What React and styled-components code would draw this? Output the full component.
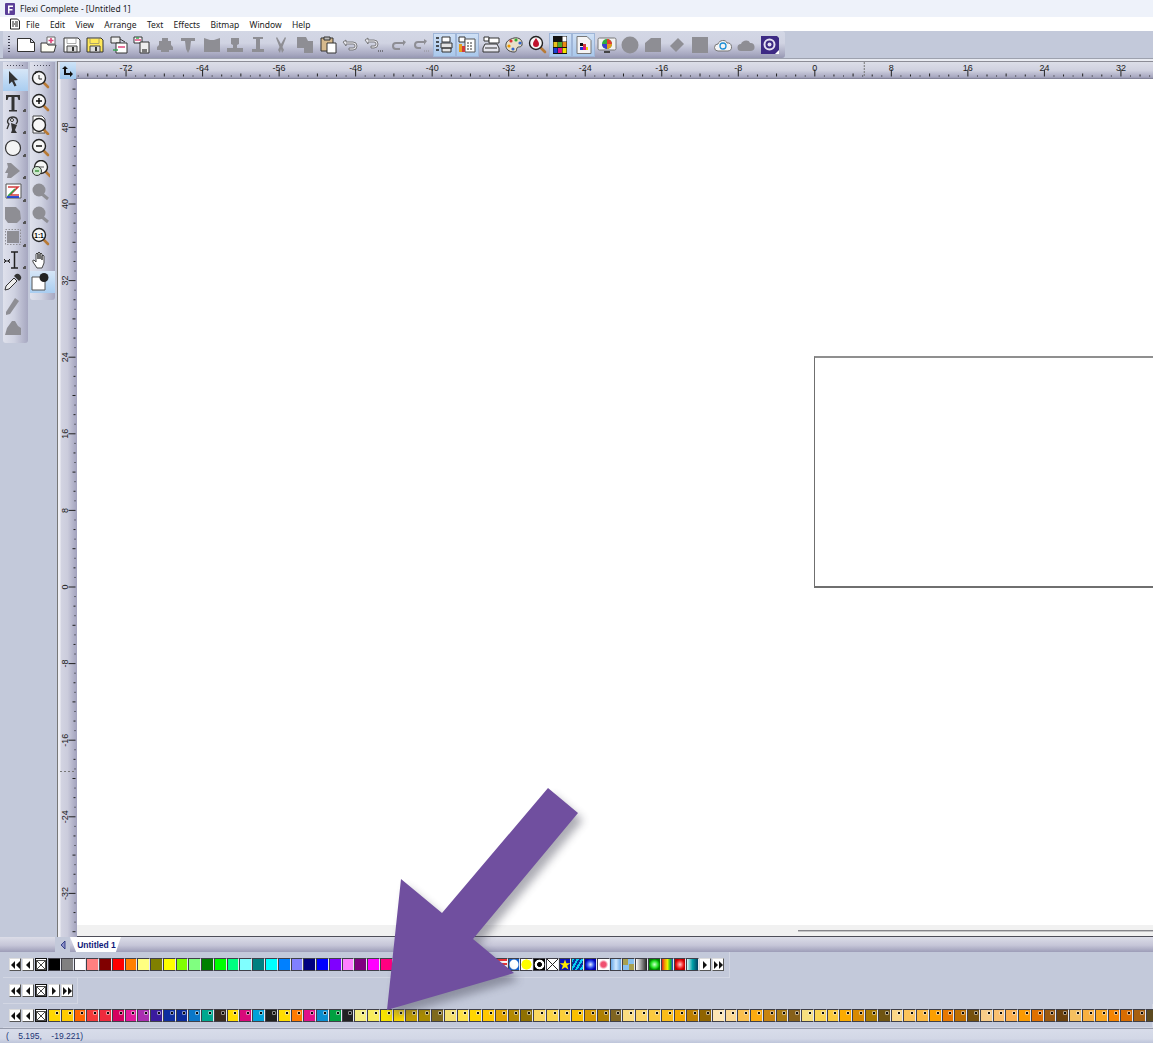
import React from "react";
import styled, { createGlobalStyle } from "styled-components";

const GlobalStyle = createGlobalStyle`
  html, body { margin: 0; padding: 0; background: #c3c9da; }
  body { font-family: "Noto Sans", "Liberation Sans", sans-serif; overflow: hidden; }
`;

const Page = styled.div`
  position: relative;
  width: 1153px;
  height: 1043px;
  overflow: hidden;
  display: flex;
  flex-direction: column;
  background: #c3c9da;
`;

const TitleBar = styled.div`
  height: 17px;
  display: flex;
  align-items: center;
  gap: 5px;
  padding-left: 5px;
  background: #eef2fa;
  font-size: 8.5px;
  color: #1c1c1c;
`;

const MenuBar = styled.div`
  height: 14px;
  display: flex;
  align-items: center;
  padding-left: 9px;
  background: #fff;
  font-size: 8.5px;
  color: #222;
`;

const MenuItem = styled.span`
  margin-right: 10.3px;
`;

const ToolbarRow = styled.div`
  height: 27px;
  flex: none;
  display: flex;
  background: #c3c9da;
  border-bottom: 1px solid #9da1ae;
  box-sizing: content-box;
`;

const ToolbarBand = styled.div`
  width: 782px;
  margin-left: 3px;
  display: flex;
  align-items: center;
  padding-left: 5px;
  box-sizing: border-box;
  border-radius: 0 3px 3px 0;
  background: linear-gradient(#d3d7e5 0%, #d0d3e2 45%, #a9aac2 85%, #9697b2 100%);
`;

const Gripper = styled.div`
  width: 2px;
  height: 18px;
  margin-right: 4px;
  background: repeating-linear-gradient(#3c3c4c 0 1px, transparent 1px 3px);
`;

const BarButton = styled.div`
  width: 23.25px;
  height: 24px;
  flex: none;
  display: flex;
  align-items: center;
  justify-content: center;
  box-sizing: border-box;
  ${(p) =>
    p.$active &&
    `background: linear-gradient(#cfe0f5, #a9c8ec);
     border: 1px solid #9fb6d8;`}
`;

const Workspace = styled.div`
  height: 878px;
  flex: none;
  display: flex;
  border-top: 2px solid #e9ebf2;
  box-sizing: border-box;
`;

const Dock = styled.div`
  width: 57px;
  flex: none;
  display: flex;
  gap: 2px;
  padding: 1px 0 0 3px;
  box-sizing: border-box;
  background: #c3c9da;
`;

const ToolColumn = styled.div`
  width: 25px;
  height: ${(p) => p.$height}px;
  border-radius: 0 0 3px 3px;
  background: linear-gradient(90deg, #dfe1ec 0%, #cfd2e1 45%, #a6a7c0 100%);
`;

const ColumnGrip = styled.div`
  height: 7px;
  margin: 0 4px 0 4px;
  background: repeating-linear-gradient(90deg, #4b4b5b 0 1px, transparent 1px 3px) 0 3px / 100% 1px no-repeat;
`;

const ToolButton = styled.div`
  height: 22.45px;
  display: flex;
  align-items: center;
  justify-content: center;
  padding-right: 5px;
  position: relative;
  ${(p) => p.$active && "background: linear-gradient(#d6e6f7 0%, #a9cdf0 100%);"}
  ${(p) =>
    p.$corner &&
    `&::after {
      content: "";
      position: absolute;
      right: 2px;
      bottom: 2px;
      border-right: 2px solid #555;
      border-bottom: 2px solid #555;
      width: 1px;
      height: 1px;
    }`}
`;

const DocumentArea = styled.div`
  flex: 1;
  min-width: 0;
  display: flex;
  flex-direction: column;
  background: #fff;
  border-left: 1px solid #777;
  border-top: 1px solid #8c8c96;
`;

const TopRulerRow = styled.div`
  height: 17px;
  flex: none;
  display: flex;
  background: linear-gradient(#dcdee8 0%, #cfd0df 50%, #a5a5be 90%, #77778c 100%);
`;

const RulerCorner = styled.div`
  width: 18px;
  flex: none;
  display: flex;
  align-items: center;
  justify-content: center;
  background: linear-gradient(#cfe4f8, #9dc7ee);
  border-left: 2px solid #e3e4ec;
  box-sizing: border-box;
`;

const BodyRow = styled.div`
  flex: 1;
  min-height: 0;
  display: flex;
`;

const SideRuler = styled.div`
  width: 19px;
  flex: none;
  background: linear-gradient(90deg, #f0f0f5 0 2px, #d3d4e2 3px, #cbccdc 50%, #a1a1bc 100%);
`;

const RulerSvg = styled.svg`
  display: block;
`;

const Canvas = styled.div`
  flex: 1;
  position: relative;
  display: flex;
  flex-direction: column;
  justify-content: flex-end;
  background: #fff;
  overflow: hidden;
`;

const PageOutline = styled.div`
  position: absolute;
  left: 737px;
  top: 277px;
  width: 500px;
  height: 232px;
  border: 1px solid #6f6f6f;
  border-top: 2px solid #8f8f8f;
  border-bottom: 2px solid #6f6f6f;
  box-sizing: border-box;
`;

const ScrollStrip = styled.div`
  height: 12px;
  flex: none;
  display: flex;
  justify-content: flex-end;
  background: #f1f1f1;
  border-bottom: 1px solid #4d4d58;
  box-sizing: border-box;
`;

const ScrollLine = styled.div`
  width: 355px;
  height: 1px;
  margin-top: 5px;
  background: #85858a;
  box-shadow: 0 1px 0 #c4c4c6;
`;

const TabStrip = styled.div`
  height: 15px;
  flex: none;
  display: flex;
  align-items: stretch;
  padding-left: 55px;
  background: linear-gradient(#dcdde8 0%, #c6c6d8 55%, #9d9db8 100%);
`;

const TabArrow = styled.div`
  width: 15px;
  display: flex;
  align-items: center;
  justify-content: center;
  background: #c3c9da;
`;

const Tab = styled.div`
  width: 51px;
  padding-left: 2px;
  box-sizing: border-box;
  display: flex;
  align-items: center;
  justify-content: center;
  background: #fff;
  color: #101a7a;
  font-family: "Liberation Sans", sans-serif;
  font-size: 8.5px;
  font-weight: 700;
  clip-path: polygon(0 0, 100% 0, 90% 100%, 12% 100%);
`;

const PaletteRow = styled.div`
  height: ${(p) => p.$height}px;
  flex: none;
  display: flex;
  align-items: center;
  box-sizing: border-box;
  ${(p) => p.$width && `width: ${p.$width}px;`}
  margin-left: 3px;
  padding-left: 6px;
  border-bottom: 1px solid #d2d6e3;
  border-right: 1px solid #d2d6e3;
`;

const NavButton = styled.div`
  width: 12px;
  height: 12.5px;
  margin-right: 1px;
  flex: none;
  display: flex;
  align-items: center;
  justify-content: center;
  box-sizing: border-box;
  color: #111;
  background: #fff;
  border: 1px solid #555;
  border-top-color: #ddd;
  border-left-color: #ddd;
`;

const EmptySwatch = styled(NavButton)`
  border: 1.5px solid #111;
`;

const Swatch = styled.div`
  width: 12.77px;
  height: 12.5px;
  flex: none;
  position: relative;
  box-sizing: border-box;
  overflow: hidden;
  border: 1px solid #3f3f48;
  border-right: 1.2px solid #e6e9f2;
  background: ${(p) => p.$fill};
`;

const SwatchDot = styled.i`
  position: absolute;
  top: 2px;
  right: 2px;
  width: 2px;
  height: 2px;
  background: #0c0c0c;
  box-shadow: 0 0 0 0.6px rgba(240, 240, 240, 0.85);
`;

const StarMark = styled.i`
  position: absolute;
  inset: 0;
  background: #ffe800;
  clip-path: polygon(50% 3%, 63% 38%, 100% 38%, 70% 60%, 82% 97%, 50% 75%, 18% 97%, 30% 60%, 0 38%, 37% 38%);
`;

const StatusBar = styled.div`
  flex: 1;
  display: flex;
  align-items: center;
  padding-left: 6px;
  white-space: pre;
  font-family: "Liberation Sans", sans-serif;
  font-size: 8.5px;
  color: #1c3576;
  background: linear-gradient(#d8dcea 0%, #d2d7e6 70%, #bec5da 100%);
  border-top: 1px solid #969bab;
`;

const ArrowOverlay = styled.svg`
  position: absolute;
  left: 0;
  top: 0;
  pointer-events: none;
`;

/* toolbar drawings */
const G = "#8e8e94";
const Floppy = ({ fill }) => (
  <>
    <path d="M2 3h14l2 2v12H2z" fill={fill} stroke="#333" />
    <path d="M5 3.500h9v5H5z" fill={fill} stroke="#777" strokeWidth=".6" />
    <path d="M5 11h10v6H5z" fill="#ddd" stroke="#444" />
    <path d="M11 12v4" stroke="#333" strokeWidth="2" />
  </>
);
const Lens = ({ children, cx = 9, cy = 8 }) => (
  <>
    <path d={`M${cx + 4} ${cy + 4}l5 5`} stroke="#b87a35" strokeWidth="2.6" strokeLinecap="round" />
    <circle cx={cx} cy={cy} r="6.500" fill="#f7f7f7" stroke="#222" strokeWidth="1.4" />
    {children}
  </>
);
const S = ({ children }) => (
  <svg width="20" height="20" viewBox="0 0 20 20">
    {children}
  </svg>
);

const barIcons = [
  { d: <path d="M1.500 3.500h13l4 4v9h-17z M14.500 3.500v4h4" fill="#fff" stroke="#333" /> },
  { d: <><path d="M2 8h6l1 2h8l-2 7H2z" fill="#fdfdf4" stroke="#333" /><path d="M8 2h8v7H8z" fill="#fff" stroke="#666" /><path d="M12 3v5M9.500 5.500h5" stroke="#e0457a" strokeWidth="1.6" /></> },
  { d: <Floppy fill="#fff" /> },
  { d: <Floppy fill="#ffe95a" /> },
  { d: <><path d="M2 2h9v6H2z" fill="#eee" stroke="#333" /><path d="M7 8h11v10H7z" fill="#fff" stroke="#333" /><path d="M9 12h7" stroke="#e0457a" strokeWidth="1.5" /><path d="M4 15h5" stroke="#3aa655" strokeWidth="1.5" /><path d="M11 4l5 3" stroke="#333" /></> },
  { d: <><path d="M2 2h8v6H2z" fill="#fff" stroke="#333" /><path d="M8 7h9v11H8z" fill="#eee" stroke="#333" /><path d="M3 5h6" stroke="#e0457a" strokeWidth="1.5" /><path d="M4 3h3" stroke="#3aa655" strokeWidth="1.5" /><path d="M10 14h5v4h-5z" fill="#777" /></> },
  { d: <path d="M7 3h6v3h3v4l2 2v3h-4v2H6v-2H2v-3l2-2V6h3z" fill={G} /> },
  { d: <path d="M3 3h14v3h-4l-1 8-2 4-2-4-1-8H3z" fill={G} /> },
  { d: <path d="M2 3l6 2h4l6-2v14H2z" fill={G} /> },
  { d: <path d="M6 3h8v6l-2 1v3h6v4H2v-4h6v-3L6 9z" fill={G} /> },
  { d: <path d="M5 2h10v2h-3v10h4v3H4v-3h4V4H5z" fill={G} /> },
  { d: <path d="M6 2l4 7 4-7 1 1-3.500 9 1.500 3-2 3-1-4-1 4-2-3 1.500-3L5 3z" fill={G} /> },
  { d: <path d="M2 2h9l2 4h5v12H9v-5H2z" fill={G} /> },
  { d: <><path d="M3 3h12v13H3z" fill="#d6b98c" stroke="#333" /><path d="M6 2h6v3H6z" fill="#bbb" stroke="#333" /><path d="M9 8h9v10H9z" fill="#fff" stroke="#333" /></> },
  { d: <path d="M2 7l3-2v2h7q4 0 4 4t-4 4H8v-2h4q2 0 2-2t-2-2H5v2z" fill="#e8e8ee" stroke="#666" strokeWidth=".8" /> },
  { d: <><path d="M1 5l3-2v2h6q4 0 4 4t-4 4H7v-2h3q2 0 2-2t-2-2H4v2z" fill="#e8e8ee" stroke="#666" strokeWidth=".8" /><path d="M14 16h1m1 0h1m1 0h1" stroke="#333" /></> },
  { d: <path d="M18 7l-3-2v2H8q-4 0-4 4t4 4h4v-2H8q-2 0-2-2t2-2h7v2z" fill={G} /> },
  { d: <><path d="M16 6l-3-2v2H7q-4 0-4 4t4 4h3v-2H7q-2 0-2-2t2-2h6v2z" fill={G} /><path d="M13 16h5" stroke={G} strokeDasharray="1 1" /></> },
  { active: true, d: <><path d="M8 2h8v5H8z" fill="#fff" stroke="#333" /><path d="M7 8h11v5H7zM8 13h9v4H8z" fill="#e4e4e4" stroke="#333" /><path d="M2 3h3M2 7h3M2 11h3M2 15h3" stroke="#222" strokeWidth="1.4" /></> },
  { active: true, d: <><path d="M2 2h6v5H2z" fill="#fff" stroke="#333" /><path d="M8 4h10v13H8z" fill="#fff" stroke="#555" /><path d="M2 9h3v8H2z" fill="#e5a020" /><path d="M5 11h3v6H5z" fill="#d23b3b" /><path d="M10 8h6M10 11h6M10 14h6" stroke="#333" strokeDasharray="2 1" /></> },
  { d: <><path d="M3 2h5v4H3z" fill="#fff" stroke="#333" /><path d="M8 3h10v5H8z" fill="#fff" stroke="#333" /><path d="M4 9h12l2 4v4H2v-4z" fill="#e6e6ee" stroke="#333" /><path d="M4 13h12" stroke="#333" /></> },
  { d: <><path d="M10 3c5-1 9 2 8 7-1 3-4 1-5 3s0 4-3 4C5 17 1 14 2 9c.5-3 4-5 8-6z" fill="#e9dfc8" stroke="#444" /><circle cx="7" cy="6" r="1.600" fill="#d33" /><circle cx="12" cy="5" r="1.600" fill="#3a3" /><circle cx="16" cy="8" r="1.600" fill="#36c" /><circle cx="5" cy="11" r="1.600" fill="#e90" /><circle cx="9" cy="14" r="1.600" fill="#36c" /></> },
  { d: <Lens><path d="M9 3c2 3 3 4 3 6a3 3 0 0 1-6 0c0-2 1-3 3-6z" fill="#c0122c" /></Lens> },
  { active: true, d: <><rect x="3" y="1" width="14" height="18" fill="#111" /><path d="M12.500 1.500h4v5h-4z" fill="#fff" /><path d="M3.500 7h4v5h-4z" fill="#e5c21a" /><path d="M8 7h4v5H8z" fill="#4aa82a" /><path d="M12.500 7h4v5h-4z" fill="#e88a14" /><path d="M3.500 13h4v5h-4z" fill="#1a3fd0" /><path d="M8 13h4v5H8z" fill="#e0108a" /><path d="M12.500 13h4v5h-4z" fill="#f5e000" /></> },
  { active: true, d: <><path d="M3 1.500h10l4 4v13H3z" fill="#f4f4f4" stroke="#777" /><path d="M6 8h3v3H6z" fill="#111" /><path d="M9 9h3v3H9z" fill="#d23b3b" /><path d="M6 12h3v3H6z" fill="#1a3fd0" /><path d="M9 12h3v3H9z" fill="#e0108a" /><path d="M12 12h2v3h-2z" fill="#f5d000" /></> },
  { d: <><rect x="1" y="3" width="18" height="12" rx="1.500" fill="#f2f2f2" stroke="#777" /><path d="M7 17h6" stroke="#444" strokeWidth="2" /><circle cx="10" cy="9" r="5" fill="#2fae3f" /><path d="M10 9V4a5 5 0 0 1 5 5z" fill="#e53a32" /><path d="M10 9h5a5 5 0 0 1-5 5z" fill="#e69a1a" /><path d="M10 9v5a5 5 0 0 1-5-5z" fill="#3a3fd0" /></> },
  { d: <circle cx="10" cy="10" r="8.500" fill={G} /> },
  { d: <path d="M2 8l6-5h10v14H2z" fill={G} /> },
  { d: <path d="M3 11l8-8 6 6-8 8z" fill={G} /> },
  { d: <path d="M2 2h16v16H2z" fill={G} /> },
  { d: <><path d="M5 16a3.500 3.500 0 0 1 0-7c1-4 8-5 9-1a4 4 0 0 1 1 8z" fill="#f4f4f4" stroke="#777" /><circle cx="10" cy="11" r="3" fill="none" stroke="#1c8fd6" strokeWidth="1.300" /></> },
  { d: <path d="M5 16a3.500 3.500 0 0 1 0-7c1-4 8-5 9-1a4 4 0 0 1 1 8z" fill={G} /> },
  { d: <><path d="M1 1h16l2 2v16H1z" fill="#3d2a84" /><circle cx="9.500" cy="9.500" r="5" fill="none" stroke="#e6e2f2" strokeWidth="2" /><circle cx="9.500" cy="9.500" r="2" fill="#e6e2f2" /><path d="M15 19l4-4v4z" fill="#fff" /></> },
];

const dockOne = [
  { active: true, d: <path d="M6 1l9 9-4 .5 2.500 5-2 1-2.500-5L6 14z" fill="#333" /> },
  { corner: true, d: <path d="M3 2h14v5h-1.500l-1-3H11.500v13h2.500v1.500H6V17h2.500V4H5.500l-1 3H3z" fill="#333" /> },
  { corner: true, d: <><path d="M10 2c-5 0-7 5-4 7l-2 5" fill="none" stroke="#333" strokeWidth="1.300" /><path d="M10 2c4 0 6 4 3 7" fill="none" stroke="#333" strokeWidth="1.300" /><path d="M8 8l6 2-2 5 2 3H8l1-3z" fill="#333" /><circle cx="9" cy="5" r="1.500" fill="#fff" stroke="#333" /></> },
  { corner: true, d: <circle cx="10" cy="10" r="7.500" fill="#f4f4f4" stroke="#333" strokeWidth="1.200" /> },
  { corner: true, d: <path d="M4 3h4l9 8-9 7H4l1-5H2l3-6z" fill={G} /> },
  { corner: true, d: <><path d="M3 2h15v14H3z" fill="#fff" stroke="#555" /><path d="M5 5h10L7 13h9" fill="none" stroke="#d23b3b" strokeWidth="1.600" /><path d="M12 7L5 14" stroke="#2fa64a" strokeWidth="1.600" /><path d="M4 15h12" stroke="#1a3fd0" strokeWidth="1.800" /></> },
  { corner: true, d: <path d="M2 2h11l4 4 1 8-4 4H5l-3-4z" fill={G} /> },
  { corner: true, d: <><path d="M2.500 2.500h15v15h-15z" fill="none" stroke={G} strokeDasharray="1.500 1.500" /><path d="M4 4h12v12H4z" fill={G} /></> },
  { corner: true, d: <><path d="M8 2h7M8 18h7M11.500 2v16" stroke="#222" strokeWidth="1.500" /><path d="M1 11h6M1 9l2 2-2 2M7 9l-2 2 2 2" stroke="#222" fill="none" /></> },
  { d: <><path d="M2 18l1-4 8-8 3 3-8 8z" fill="#eee" stroke="#333" /><path d="M11 4l2-2q2-1 4 1t1 4l-2 2z" fill="#333" /></> },
  { d: <path d="M3 17l9-14 4 3-9 13-4 1z" fill={G} /> },
  { d: <path d="M2 18l2-7 5-7 3 0 3 5 3 2v7z" fill={G} /> },
];

const dockTwo = [
  { d: <Lens><path d="M5 4l2-2M5 2h3M9 5v4h3" stroke="#222" fill="none" /></Lens> },
  { d: <Lens><path d="M6 8h6M9 5v6" stroke="#111" strokeWidth="1.500" /></Lens> },
  { d: <><path d="M3 1h9l3 3v14H3z" fill="#fff" stroke="#444" /><Lens cx={9} cy={10}></Lens></> },
  { d: <Lens><path d="M6 8h6" stroke="#111" strokeWidth="1.500" /></Lens> },
  { d: <><Lens cx={11} cy={7}><path d="M8 7h6" stroke="#555" /></Lens><circle cx="7" cy="11" r="4.500" fill="#cfe8cf" stroke="#333" /><path d="M5 11h4" stroke="#2a8a2a" strokeWidth="1.300" /></> },
  { d: <><circle cx="9" cy="8" r="6.500" fill={G} /><path d="M12 12l6 5" stroke={G} strokeWidth="3" /></> },
  { d: <><circle cx="9" cy="8" r="6.500" fill={G} /><path d="M12 12l6 5" stroke={G} strokeWidth="3" /></> },
  { d: <Lens cx={9} cy={8}><text x="9" y="10.500" textAnchor="middle" fontSize="6.500" fontWeight="700" fontFamily="Liberation Sans">1:1</text></Lens> },
  { d: <path d="M7 18l-4-6q-1-2 1-2l2 2V4q1-2 2 0v5V3q1-2 2 0v6V4q1-2 2 0v6V6q1-2 2 0v7l-2 5z" fill="#fff" stroke="#333" strokeWidth=".9" /> },
  { active: true, d: <><path d="M2 5h13v13H2z" fill="#fff" stroke="#555" /><circle cx="14" cy="5.500" r="4.500" fill="#222" /></> },
];

const menuItems = ["File", "Edit", "View", "Arrange", "Text", "Effects", "Bitmap", "Window", "Help"];

const STAR_INDEX = 40;

const solids = [
  "#000000", "#808080", "#ffffff", "#ff8080", "#800000", "#ff0000", "#ff8000", "#ffff80", "#808000",
  "#ffff00", "#80ff00", "#80ff80", "#008000", "#00ff00", "#00ff80", "#80ffff", "#008080", "#00ffff",
  "#0080ff", "#8080ff", "#000080", "#0000ff", "#8000ff", "#ff80ff", "#800080", "#ff00ff", "#ff0080",
  "#800040", "#ff8040", "#804000", "#ffc080", "#c0c0c0", "#404040", "#ff4040", "#c00000",
  "repeating-linear-gradient(#e33 0 2px, #fff 2px 4px)",
  "radial-gradient(closest-side, #fff 78%, #1560c8 100%)",
  "radial-gradient(closest-side, #ff0 88%, #fff 96%)",
  "radial-gradient(closest-side, #000 40%, #fff 44%, #fff 84%, #000 94%)",
  "linear-gradient(45deg, transparent 46%, #222 46% 54%, transparent 54%), linear-gradient(-45deg, transparent 46%, #222 46% 54%, transparent 54%), #fff",
  "#0a14b8",
  "repeating-linear-gradient(120deg, #0ad0f0 0 2px, #0a30a0 2px 4px)",
  "radial-gradient(closest-side, #d8e4ff 5%, #3050f0 60%, #0000b0 100%)",
  "radial-gradient(closest-side, #f05070 45%, #fff 85%)",
  "linear-gradient(90deg, #68a8e8, #d0e8ff 50%, #68a8e8)",
  "conic-gradient(#88c0f0 0 90deg, #a8a050 90deg 180deg, #88c0f0 180deg 270deg, #a8a050 270deg)",
  "linear-gradient(90deg, #fff, #222)",
  "radial-gradient(closest-side, #c0ffc0 5%, #20e020 65%, #008000 100%)",
  "linear-gradient(90deg, #e02020, #f0a000, #f0f000, #20c020, #2040e0)",
  "radial-gradient(closest-side, #ffc0c0 5%, #f02020 70%, #c00000 100%)",
  "linear-gradient(90deg, #e0f8f8, #00a0a8, #004060)",
];

const dotted = [
  "#ffd800", "#ffcc00", "#ff6600", "#f23a3a", "#ee2a3c", "#d4005f", "#e2189b", "#a92fb0", "#3a1a9e", "#0f2ea0",
  "#0a2a9a", "#0a77c8", "#00a88f", "#3a2a20", "#ffdd00", "#d80a7a", "#00a0d8", "#1f1f1f", "#ffdd00", "#ff7a00",
  "#e0108a", "#0a8ed0", "#00a040", "#222222", "#f7ee80", "#f8ec5e", "#f7e300", "#ffdc00", "#c09c00", "#a88a00",
  "#7f6a1c", "#f5e070", "#fde24a", "#ffd600", "#ffc800", "#e0a400", "#b38800", "#8f7000", "#fbd860", "#fcd64a",
  "#fccf3a", "#fbc000", "#d89a00", "#ad7e00", "#7f6420", "#fbdc80", "#fcd566", "#fbca3f", "#fbbd1a", "#f7a900",
  "#bc7e00", "#8f6400", "#fde6b4", "#fcd994", "#fbc04e", "#fbab10", "#c88410", "#a87810", "#86601a", "#f7e080",
  "#fbd452", "#fbca3c", "#fbab00", "#d98a00", "#a87800", "#6f5412", "#fbd888", "#fcc45a", "#fbb840", "#fb9f00",
  "#e87800", "#bf6f00", "#74500e", "#f8cc88", "#fbc070", "#fbb050", "#fb9a00", "#e07000", "#9c5a10", "#6a400c",
  "#f5c060", "#f8b040", "#f8a520", "#f58400", "#d86c00", "#a86010", "#5c4a20",
];

const UNIT = 9.575;

const tickLength = (v) => (v % 8 === 0 ? 7 : v % 4 === 0 ? 3 : v % 2 === 0 ? 2 : 1);

const HorizontalRuler = () => {
  const ticks = [];
  for (let v = -77; v <= 35; v++) ticks.push(v);
  return (
    <RulerSvg width="1078" height="17" viewBox="0 0 1078 17">
      {ticks.map((v) => {
        const x = 739.5 + v * UNIT;
        const len = tickLength(v);
        return <line key={v} x1={x} x2={x} y1={14.5 - len} y2={14.5} stroke="#222" strokeWidth="1" />;
      })}
      {ticks.filter((v) => v % 8 === 0).map((v) => (
        <text key={v} x={739.5 + v * UNIT} y="9" textAnchor="middle" fontSize="9" fontFamily="Liberation Sans" fill="#1b1b1b">
          {v}
        </text>
      ))}
      <line x1="789" x2="789" y1="0" y2="14" stroke="#777" strokeDasharray="2 1" />
    </RulerSvg>
  );
};

const VerticalRuler = () => {
  const ticks = [];
  for (let v = -37; v <= 53; v++) ticks.push(v);
  return (
    <RulerSvg width="19" height="856" viewBox="0 0 19 856">
      {ticks.map((v) => {
        const y = 508 - v * UNIT;
        const len = tickLength(v);
        return <line key={v} y1={y} y2={y} x1={17.5 - len} x2={17.5} stroke="#222" strokeWidth="1" />;
      })}
      {ticks.filter((v) => v % 8 === 0).map((v) => (
        <text key={v} transform={`translate(9.500 ${508 - v * UNIT}) rotate(-90)`} textAnchor="middle" fontSize="9" fontFamily="Liberation Sans" fill="#1b1b1b">
          {v}
        </text>
      ))}
      <line x1="2" x2="17" y1="692.500" y2="692.500" stroke="#777" strokeDasharray="2 2" />
    </RulerSvg>
  );
};

const Glyph = ({ kind }) => {
  const shapes = {
    first: "M5 1v8L1 5zM10 1v8L6 5z",
    prev: "M7 1v8L3 5z",
    next: "M3 1v8l4-4z",
    last: "M1 1v8l4-4zM6 1v8l4-4z",
  };
  return (
    <svg width="10" height="10" viewBox="0 0 10 10">
      <path d={shapes[kind]} fill="#111" />
    </svg>
  );
};

const NoColor = () => (
  <EmptySwatch>
    <svg width="10" height="10" viewBox="0 0 10 10">
      <path d="M.5.5h9v9h-9zM.5.5l9 9M9.500.5l-9 9" fill="#fff" stroke="#333" strokeWidth=".9" />
    </svg>
  </EmptySwatch>
);

const NavStart = () => (
  <>
    <NavButton><Glyph kind="first" /></NavButton>
    <NavButton><Glyph kind="prev" /></NavButton>
    <NoColor />
  </>
);

const NavEnd = () => (
  <>
    <NavButton><Glyph kind="next" /></NavButton>
    <NavButton><Glyph kind="last" /></NavButton>
  </>
);

const App = () => {
  return (
    <Page>
      <GlobalStyle />
      <TitleBar>
        <svg width="10" height="12" viewBox="0 0 10 12">
          <rect width="10" height="12" rx="1" fill="#5b3f98" />
          <path d="M3 2.500h5v1.500H4.500v2H7.500v1.500h-3V10.500H3z" fill="#fff" />
        </svg>
        <span>Flexi Complete - [Untitled 1]</span>
      </TitleBar>
      <MenuBar>
        <svg width="12" height="12" viewBox="0 0 12 12" style={{ marginRight: 5 }}>
          <path d="M1.500 1h7l2 2v8h-9z" fill="#fff" stroke="#222" />
          <path d="M3 4h2M6 4h3M3 6h6M3 8h2M6 8h3" stroke="#222" />
        </svg>
        {menuItems.map((m) => (
          <MenuItem key={m}>{m}</MenuItem>
        ))}
      </MenuBar>
      <ToolbarRow>
        <ToolbarBand>
          <Gripper />
          {barIcons.map((b, i) => (
            <BarButton key={i} $active={b.active}>
              <S>{b.d}</S>
            </BarButton>
          ))}
        </ToolbarBand>
      </ToolbarRow>
      <Workspace>
        <Dock>
          <ToolColumn $height={281}>
            <ColumnGrip />
            {dockOne.map((t, i) => (
              <ToolButton key={i} $active={t.active} $corner={t.corner}>
                <S>{t.d}</S>
              </ToolButton>
            ))}
          </ToolColumn>
          <ToolColumn $height={238}>
            <ColumnGrip />
            {dockTwo.map((t, i) => (
              <ToolButton key={i} $active={t.active}>
                <S>{t.d}</S>
              </ToolButton>
            ))}
          </ToolColumn>
        </Dock>
        <DocumentArea>
          <TopRulerRow>
            <RulerCorner>
              <svg width="12" height="12" viewBox="0 0 12 12">
                <path d="M3 1l3 3H4v4h4V6l3 3-3 3v-2H2V4H0z" fill="#111" />
              </svg>
            </RulerCorner>
            <HorizontalRuler />
          </TopRulerRow>
          <BodyRow>
            <SideRuler>
              <VerticalRuler />
            </SideRuler>
            <Canvas>
              <PageOutline />
              <ScrollStrip>
                <ScrollLine />
              </ScrollStrip>
            </Canvas>
          </BodyRow>
        </DocumentArea>
      </Workspace>
      <TabStrip>
        <TabArrow>
          <svg width="8" height="10" viewBox="0 0 8 10">
            <path d="M6 1v8L2 5z" fill="#8c90c8" stroke="#1c2a78" strokeWidth=".8" />
          </svg>
        </TabArrow>
        <Tab>Untitled 1</Tab>
      </TabStrip>
      <PaletteRow $height={26} $width={727}>
        <NavStart />
        {solids.map((c, i) => (
          <Swatch key={i} $fill={c}>
            {i === STAR_INDEX && <StarMark />}
          </Swatch>
        ))}
        <NavEnd />
      </PaletteRow>
      <PaletteRow $height={26} $width={75}>
        <NavStart />
        <NavEnd />
      </PaletteRow>
      <PaletteRow $height={24}>
        <NavStart />
        {dotted.map((c, i) => (
          <Swatch key={i} $fill={c}>
            <SwatchDot />
          </Swatch>
        ))}
      </PaletteRow>
      <StatusBar>{"(    5.195,    -19.221)"}</StatusBar>
      <ArrowOverlay width="1153" height="1043" viewBox="0 0 1153 1043">
        <defs>
          <filter id="arrowBlur" x="-20%" y="-20%" width="140%" height="140%">
            <feGaussianBlur stdDeviation="4" />
          </filter>
        </defs>
        <polygon
          points="387,1010 401,879 442,913 548,788 578,813 473,939 514,973"
          fill="#4a4a5a"
          opacity="0.45"
          transform="translate(5 7)"
          filter="url(#arrowBlur)"
        />
        <polygon points="387,1010 401,879 442,913 548,788 578,813 473,939 514,973" fill="#704f9f" />
      </ArrowOverlay>
    </Page>
  );
};

export default App;
